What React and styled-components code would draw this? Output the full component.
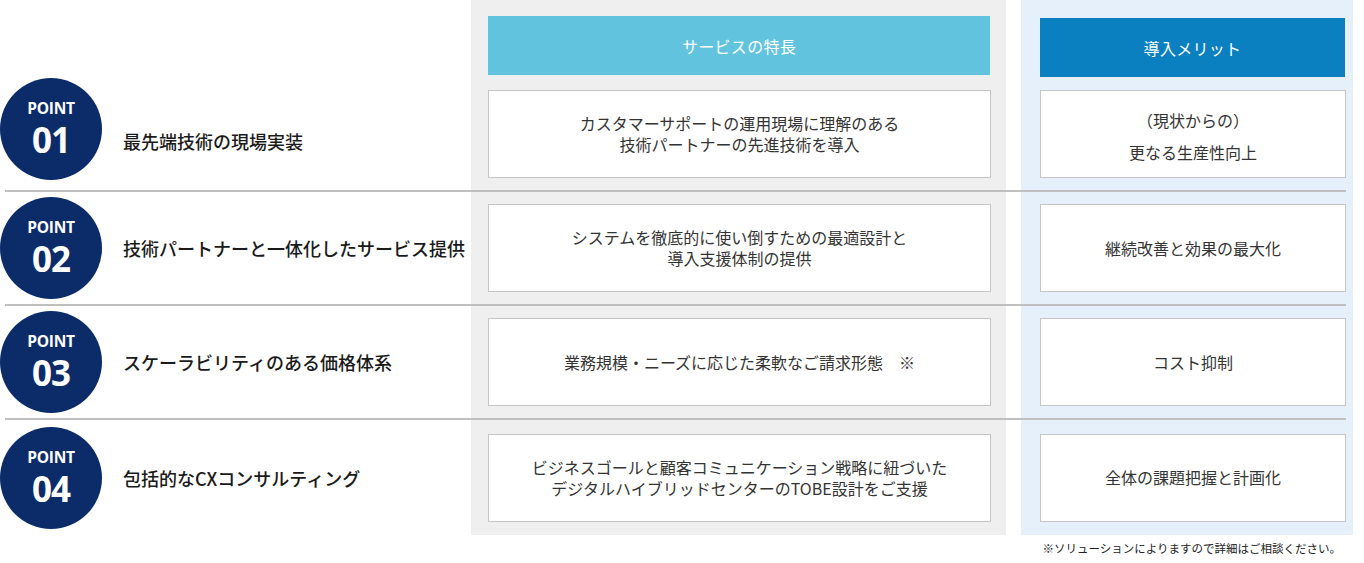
import React from "react";
import styled, { createGlobalStyle } from "styled-components";

const Global = createGlobalStyle`
  html, body { margin: 0; padding: 0; background: #ffffff; }
  body { font-family: "Noto Sans CJK JP", "Noto Sans", sans-serif; color: #222; }
`;

const Page = styled.div`
  display: grid;
  width: 1364px;
  grid-template-columns: 471px 535px 15px 332px 11px;
  grid-template-rows: 77px 113px 2px 112px 2px 112px 2px 115px auto;
`;

const ColumnBg = styled.div`
  grid-column: ${(p) => p.$col};
  grid-row: 1 / 9;
  background: ${(p) => p.$bg};
`;

const Header = styled.div`
  grid-row: 1;
  grid-column: ${(p) => p.$col};
  align-self: start;
  margin: ${(p) => p.$margin};
  height: 59px;
  background: ${(p) => p.$bg};
  color: #ffffff;
  display: flex;
  align-items: center;
  justify-content: center;
  font-size: 16px;
  letter-spacing: 0.3px;
`;

const Lead = styled.div`
  grid-column: 1;
  grid-row: ${(p) => p.$row};
  display: flex;
  align-items: center;
  gap: 21px;
`;

const Circle = styled.div`
  flex: none;
  width: 102px;
  height: 102px;
  border-radius: 50%;
  background: #0c2b69;
  color: #ffffff;
  display: flex;
  flex-direction: column;
  align-items: center;
  justify-content: center;
  gap: 5px;
  font-family: "Open Sans", "Liberation Sans", sans-serif;
  font-weight: 700;
  margin-top: ${(p) => p.$mt || 0}px;
`;

const PointLabel = styled.span`
  display: block;
  font-size: 15.5px;
  line-height: 17px;
  letter-spacing: -0.3px;
`;

const PointNum = styled.span`
  display: block;
  font-size: 35px;
  line-height: 36px;
  letter-spacing: -1px;
`;

const Title = styled.div`
  font-size: 18px;
  font-weight: 500;
  color: #1a1a1a;
  margin-top: ${(p) => p.$mt || 0}px;
`;

const Card = styled.div`
  grid-column: ${(p) => p.$col};
  grid-row: ${(p) => p.$row};
  align-self: center;
  height: 88px;
  box-sizing: border-box;
  margin: ${(p) => p.$margin};
  padding-top: ${(p) => p.$pt || 0}px;
  background: #ffffff;
  border: 1px solid #c6c6c6;
  display: flex;
  flex-direction: column;
  align-items: center;
  justify-content: center;
  text-align: center;
  font-size: 16px;
  line-height: ${(p) => p.$lh || 21}px;
  color: #333333;
`;

const Line = styled.span`
  display: block;
`;

const Separator = styled.div`
  grid-column: 1 / 6;
  grid-row: ${(p) => p.$row};
  margin: 0 18px 0 5px;
  background: #bfbfbf;
`;

const Footnote = styled.div`
  grid-column: 3 / 6;
  grid-row: 9;
  text-align: right;
  padding: 5px 23px 0 0;
  font-size: 11.5px;
  line-height: 16px;
  color: #222;
`;

const rows = [
  {
    num: "01",
    title: "最先端技術の現場実装",
    feature: ["カスタマーサポートの運用現場に理解のある", "技術パートナーの先進技術を導入"],
    merit: ["（現状からの）", "更なる生産性向上"],
    meritLh: 32,
    meritPt: 5,
    circleMt: -10,
    titleMt: 14,
  },
  {
    num: "02",
    title: "技術パートナーと一体化したサービス提供",
    feature: ["システムを徹底的に使い倒すための最適設計と", "導入支援体制の提供"],
    merit: ["継続改善と効果の最大化"],
  },
  {
    num: "03",
    title: "スケーラビリティのある価格体系",
    feature: ["業務規模・ニーズに応じた柔軟なご請求形態　※"],
    merit: ["コスト抑制"],
  },
  {
    num: "04",
    title: "包括的なCXコンサルティング",
    feature: ["ビジネスゴールと顧客コミュニケーション戦略に紐づいた", "デジタルハイブリッドセンターのTOBE設計をご支援"],
    merit: ["全体の課題把握と計画化"],
  },
];

export default function App() {
  return (
    <>
      <Global />
      <Page>
        <ColumnBg $col={2} $bg="#efefef" />
        <ColumnBg $col={4} $bg="#e5f0fb" />
        <Header $col={2} $bg="#62c3df" $margin="16px 16px 0 17px">
          サービスの特長
        </Header>
        <Header $col={4} $bg="#0a80c0" $margin="18px 8px 0 19px">
          導入メリット
        </Header>
        {rows.map((r, i) => {
          const row = 2 + i * 2;
          return (
            <React.Fragment key={r.num}>
              <Lead $row={row}>
                <Circle $mt={r.circleMt}>
                  <PointLabel>POINT</PointLabel>
                  <PointNum>{r.num}</PointNum>
                </Circle>
                <Title $mt={r.titleMt}>{r.title}</Title>
              </Lead>
              <Card $col={2} $row={row} $margin="0 15px 0 17px">
                {r.feature.map((t) => (
                  <Line key={t}>{t}</Line>
                ))}
              </Card>
              <Card $col={4} $row={row} $margin="0 7px 0 19px" $lh={r.meritLh} $pt={r.meritPt}>
                {r.merit.map((t) => (
                  <Line key={t}>{t}</Line>
                ))}
              </Card>
              {i < rows.length - 1 && <Separator $row={row + 1} />}
            </React.Fragment>
          );
        })}
        <Footnote>※ソリューションによりますので詳細はご相談ください。</Footnote>
      </Page>
    </>
  );
}
